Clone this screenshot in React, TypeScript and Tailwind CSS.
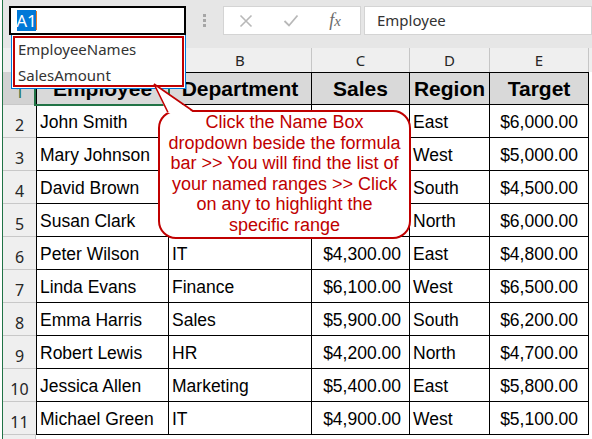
type Row = {
  n: number;
  name: string;
  dept: string;
  sales: string;
  region: string;
  target: string;
};

// rows 2-5 of Department/Sales sit under the note, so they stay blank
const rows: Row[] = [
  { n: 2, name: "John Smith", dept: "", sales: "", region: "East", target: "$6,000.00" },
  { n: 3, name: "Mary Johnson", dept: "", sales: "", region: "West", target: "$5,000.00" },
  { n: 4, name: "David Brown", dept: "", sales: "", region: "South", target: "$4,500.00" },
  { n: 5, name: "Susan Clark", dept: "", sales: "", region: "North", target: "$6,000.00" },
  { n: 6, name: "Peter Wilson", dept: "IT", sales: "$4,300.00", region: "East", target: "$4,800.00" },
  { n: 7, name: "Linda Evans", dept: "Finance", sales: "$6,100.00", region: "West", target: "$6,500.00" },
  { n: 8, name: "Emma Harris", dept: "Sales", sales: "$5,900.00", region: "South", target: "$6,200.00" },
  { n: 9, name: "Robert Lewis", dept: "HR", sales: "$4,200.00", region: "North", target: "$4,700.00" },
  { n: 10, name: "Jessica Allen", dept: "Marketing", sales: "$5,400.00", region: "East", target: "$5,800.00" },
  { n: 11, name: "Michael Green", dept: "IT", sales: "$4,900.00", region: "West", target: "$5,100.00" },
];

const ui = "font-['Noto_Sans',sans-serif]";

function FormulaBar() {
  return (
    <div className="flex h-[48px] shrink-0 items-start bg-[#e6e6e6] pt-[6px]">
      {/* name box */}
      <div className="ml-[6px] flex h-[29px] w-[177px] items-center border-2 border-black bg-white pl-[6px]">
        <span className={`${ui} flex h-[21px] w-[19px] items-center justify-center bg-[#0078d7] text-[17px] text-white`}>
          A1
        </span>
        <span className="h-[19px] w-px bg-[#e87722]" />
      </div>

      <div className="ml-[17px] mt-[8px] flex w-[3px] flex-col gap-[2px]">
        <span className="h-[3px] w-[3px] bg-[#a6a6a6]" />
        <span className="h-[3px] w-[3px] bg-[#a6a6a6]" />
        <span className="h-[3px] w-[3px] bg-[#a6a6a6]" />
      </div>

      {/* cancel / enter / insert function */}
      <div className="ml-[17px] flex h-[29px] w-[138px] items-center border border-[#d4d4d4] bg-white">
        <span className="flex w-[44px] justify-center">
          <svg width="14" height="14" viewBox="0 0 14 14">
            <path d="M1.5 1.5 L12.5 12.5 M12.5 1.5 L1.5 12.5" stroke="#b8b8b8" strokeWidth="1.6" fill="none" />
          </svg>
        </span>
        <span className="flex w-[46px] justify-center">
          <svg width="16" height="13" viewBox="0 0 16 13">
            <path d="M1.5 7 L6 11.5 L14.5 1.5" stroke="#b8b8b8" strokeWidth="1.8" fill="none" />
          </svg>
        </span>
        <span className="flex w-[42px] justify-center">
          <span className="font-['Liberation_Serif',serif] text-[18px] italic text-[#6b6b6b]">
            f<span className="text-[15px]">x</span>
          </span>
        </span>
      </div>

      <div className={`${ui} ml-[3px] flex h-[29px] flex-1 items-center border border-[#d4d4d4] bg-white pl-[12px] text-[15px] text-[#333]`}>
        Employee
      </div>
    </div>
  );
}

function ColumnHeaders() {
  return (
    <div className={`${ui} flex h-[24px] shrink-0 bg-[#efefef] text-[15px] text-[#262626]`}>
      <div className="w-[33px]" />
      {/* column A sits under the open name list */}
      <div className="w-[132px] border-l border-[#c6c6c6] bg-[#d2d2d2]" />
      <div className="flex w-[143px] items-center justify-center border-l border-[#c6c6c6]">B</div>
      <div className="flex w-[98px] items-center justify-center border-l border-[#c6c6c6]">C</div>
      <div className="flex w-[80px] items-center justify-center border-l border-[#c6c6c6]">D</div>
      <div className="flex w-[99px] items-center justify-center border-l border-[#c6c6c6]">E</div>
      <div className="flex-1 border-l border-[#c6c6c6]" />
    </div>
  );
}

function RowHead({ n, active }: { n: number; active?: boolean }) {
  return (
    <div
      className={`${ui} flex w-[33px] shrink-0 items-end justify-center border-b border-[#c8c8c8] text-[16px] ${
        active ? "bg-[#d2d2d2] text-[#217346]" : "bg-[#efefef] text-[#262626]"
      }`}
    >
      {n}
    </div>
  );
}

function HeaderRow() {
  const cell = "flex items-center justify-center border-l border-y border-black bg-[#d9d9d9] text-[21px] font-bold";
  return (
    <div className="flex h-[33px] shrink-0">
      <RowHead n={1} active />
      <div className={`${cell} w-[132px]`}>Employee</div>
      <div className={`${cell} w-[143px]`}>Department</div>
      <div className={`${cell} w-[98px]`}>Sales</div>
      <div className={`${cell} w-[80px]`}>Region</div>
      <div className={`${cell} w-[99px]`}>Target</div>
      <div className="flex-1 border-l border-black" />
    </div>
  );
}

function DataRow({ row }: { row: Row }) {
  const cell = "flex items-center border-l border-b border-black pt-[2px] text-[17.5px]";
  return (
    <div className="flex h-[33px] shrink-0">
      <RowHead n={row.n} />
      <div className={`${cell} w-[132px] pl-[3px]`}>{row.name}</div>
      <div className={`${cell} w-[143px] pl-[3px]`}>{row.dept}</div>
      <div className={`${cell} w-[98px] justify-end pr-[8px]`}>{row.sales}</div>
      <div className={`${cell} w-[80px] pl-[3px]`}>{row.region}</div>
      <div className={`${cell} w-[99px] justify-end pr-[10px]`}>{row.target}</div>
      <div className="flex-1 border-l border-black" />
    </div>
  );
}

export default function App() {
  return (
    <div className="relative flex h-[439px] w-[592px] overflow-hidden bg-white font-['Liberation_Sans',Arial,sans-serif] text-black">
      <div className="w-[3px] shrink-0 border-r border-[#217346]" />
      <div className="flex min-w-0 flex-1 flex-col">
        <FormulaBar />
        <ColumnHeaders />
        <HeaderRow />
        {rows.map((r) => (
          <DataRow key={r.n} row={r} />
        ))}
        <div className="flex h-[33px] shrink-0">
          <div className="w-[33px] shrink-0 border-r border-[#c8c8c8] bg-[#efefef]" />
        </div>
      </div>

      {/* active cell outline */}
      <div className="absolute left-[34px] top-[71px] h-[35px] w-[136px] border-2 border-[#217346]" />
      <div className="absolute left-[165px] top-[101px] h-[7px] w-[7px] border border-white bg-[#217346]" />

      {/* name box dropdown */}
      <div className="absolute left-[11px] top-[35px] h-[54px] w-[175px] border border-t-0 border-[#0078d7] bg-white p-px">
        <div className={`${ui} h-full border-2 border-[#c00000] pl-[3px] text-[15px] text-[#333]`}>
          <div className="mt-[1px] h-[20px] leading-[20px]">EmployeeNames</div>
          <div className="mt-[6px] h-[20px] leading-[20px]">SalesAmount</div>
        </div>
      </div>

      {/* callout */}
      <div className="absolute left-[158px] top-[110px] flex h-[129px] w-[253px] flex-col items-center rounded-[18px] border-2 border-[#c00000] bg-white text-center text-[18px] leading-[20.6px] text-[#c00000]">
        <span>Click the Name Box</span>
        <span>dropdown beside the formula</span>
        <span>bar &gt;&gt; You will find the list of</span>
        <span>your named ranges &gt;&gt; Click</span>
        <span>on any to highlight the</span>
        <span>specific range</span>
      </div>
      <svg className="absolute left-[150px] top-[80px]" width="50" height="36" viewBox="0 0 50 36">
        <polygon points="4,4 17,33 44,33" fill="white" />
        <path d="M4 4 L18 32.5 M4 4 L43 31" stroke="#c00000" strokeWidth="1.6" fill="none" />
      </svg>
    </div>
  );
}
